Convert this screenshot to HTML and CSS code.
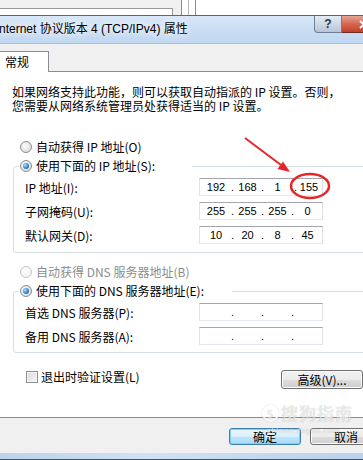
FILE: index.html
```html
<!DOCTYPE html>
<html lang="zh-CN">
<head>
    <meta charset="UTF-8">
    <meta name="viewport" content="width=device-width, initial-scale=1.0">
    <title>Internet 协议版本 4 (TCP/IPv4) 属性</title>
    <link rel="stylesheet" href="styles.css">
</head>
<body>
    <div class="bg-top">
        <div class="bg-left"><div class="bg-field"></div></div>
        <div class="bg-split"><div class="bg-split-inner"></div></div>
    </div>

    <div class="titlebar">
        <span class="title">nternet 协议版本 4 (TCP/IPv4) 属性</span>
        <div class="caption-btns">
            <span class="help-btn">?</span>
            <span class="close-btn">
                <svg width="10" height="9" viewBox="0 0 10 9"><path d="M1 1 L9 8 M9 1 L1 8" stroke="#fff" stroke-width="2"/></svg>
            </span>
        </div>
    </div>

    <div class="tabbar">
        <div class="tab">常规</div>
    </div>

    <div class="panel">
        <p class="intro">如果网络支持此功能，则可以获取自动指派的 IP 设置。否则，<br>您需要从网络系统管理员处获得适当的 IP 设置。</p>

        <div class="option first"><span class="radio"></span>自动获得 IP 地址(O)</div>
        <fieldset class="group">
            <legend class="option legend-ip"><span class="radio checked"></span>使用下面的 IP 地址(S):</legend>
            <div class="field">
                <span class="label">IP 地址(I):</span>
                <div class="ip">
                    <span class="oct"><span class="num">192</span></span>
                    <span class="oct"><span class="dot">.</span><span class="num">168</span></span>
                    <span class="oct"><span class="dot">.</span><span class="num">1</span></span>
                    <span class="oct last"><span class="dot">.</span><span class="num">155</span></span>
                </div>
            </div>
            <div class="field">
                <span class="label">子网掩码(U):</span>
                <div class="ip">
                    <span class="oct"><span class="num">255</span></span>
                    <span class="oct"><span class="dot">.</span><span class="num">255</span></span>
                    <span class="oct"><span class="dot">.</span><span class="num">255</span></span>
                    <span class="oct"><span class="dot">.</span><span class="num">0</span></span>
                </div>
            </div>
            <div class="field">
                <span class="label">默认网关(D):</span>
                <div class="ip">
                    <span class="oct"><span class="num">10</span></span>
                    <span class="oct"><span class="dot">.</span><span class="num">20</span></span>
                    <span class="oct"><span class="dot">.</span><span class="num">8</span></span>
                    <span class="oct"><span class="dot">.</span><span class="num">45</span></span>
                </div>
            </div>
        </fieldset>

        <div class="option disabled dns-auto"><span class="radio"></span>自动获得 DNS 服务器地址(B)</div>
        <fieldset class="group dns">
            <legend class="option legend-dns"><span class="radio checked"></span>使用下面的 DNS 服务器地址(E):</legend>
            <div class="field">
                <span class="label">首选 DNS 服务器(P):</span>
                <div class="ip">
                    <span class="oct"><span class="num"></span></span>
                    <span class="oct"><span class="dot">.</span><span class="num"></span></span>
                    <span class="oct"><span class="dot">.</span><span class="num"></span></span>
                    <span class="oct"><span class="dot">.</span><span class="num"></span></span>
                </div>
            </div>
            <div class="field">
                <span class="label">备用 DNS 服务器(A):</span>
                <div class="ip">
                    <span class="oct"><span class="num"></span></span>
                    <span class="oct"><span class="dot">.</span><span class="num"></span></span>
                    <span class="oct"><span class="dot">.</span><span class="num"></span></span>
                    <span class="oct"><span class="dot">.</span><span class="num"></span></span>
                </div>
            </div>
        </fieldset>

        <div class="verify">
            <span class="checkbox"></span>
            <span class="verify-text">退出时验证设置(L)</span>
            <button class="btn advanced">高级(V)...</button>
        </div>
    </div>

    <div class="footer">
        <button class="btn ok">确定</button>
        <button class="btn">取消</button>
    </div>
    <div class="frame-bottom"></div>

    <!-- annotation drawn on top of the screenshot -->
    <svg class="annotation" width="363" height="460" viewBox="0 0 363 460">
        <line x1="245" y1="138" x2="281" y2="165" stroke="#e4262b" stroke-width="2"/>
        <polygon points="290,172 277.5,169 283,161.5" fill="#e4262b"/>
        <ellipse cx="310" cy="186" rx="19" ry="12" fill="none" stroke="#e4262b" stroke-width="2.5"/>
    </svg>

    <div class="watermark">
        <div class="wm-main"><span class="wm-logo">S</span>搜狗指南</div>
        <div class="wm-sub">zhinan.sogou.com</div>
    </div>
</body>
</html>
```

FILE: styles.css
```css
body {
    margin: 0;
    width: 363px;
    height: 460px;
    overflow: hidden;
    position: relative;
    background: #fff;
    font-family: "Noto Sans CJK SC", "Liberation Sans", sans-serif;
    font-size: 12px;
    color: #000;
}

/* window behind the dialog */
.bg-top {
    height: 15px;
    display: flex;
    background: #fff;
}

.bg-left {
    width: 181px;
    background: #f0f0f0;
    padding-top: 8px;
    box-sizing: border-box;
}

.bg-field {
    width: 173px;
    height: 7px;
    background: #fff;
    border-top: 1px solid #9a9a9a;
    border-right: 1px solid #9a9a9a;
    box-sizing: border-box;
}

.bg-split {
    width: 15px;
    border-left: 1px solid #8d8d8d;
    border-right: 1px solid #8d8d8d;
    box-sizing: border-box;
    background: #fff;
    padding-left: 6px;
}

.bg-split-inner {
    height: 15px;
    width: 1px;
    background: #b5b5b5;
}

/* title bar */
.titlebar {
    height: 29px;
    box-sizing: border-box;
    border-top: 1px solid #5d6470;
    border-bottom: 1px solid #a9c0d9;
    background: linear-gradient(to bottom, #d9e8f8 0%, #c9ddf3 50%, #c1d8f1 100%);
    display: flex;
    align-items: flex-start;
}

.title {
    font-family: "Liberation Sans", "Noto Sans CJK SC", sans-serif;
    font-size: 12px;
    line-height: 27px;
    margin-left: -1px;
    text-shadow: 0 0 6px #fff, 0 0 10px #fff;
}

.caption-btns {
    margin-left: auto;
    margin-right: -23px;
    display: flex;
}

.help-btn {
    width: 28px;
    height: 17px;
    box-sizing: border-box;
    border: 1px solid #6f7e92;
    border-top: none;
    border-radius: 0 0 0 4px;
    background: linear-gradient(to bottom, #e4ecf5 0%, #cdd9e7 50%, #b6c6d9 100%);
    text-align: center;
    font-family: "Liberation Sans", sans-serif;
    font-weight: bold;
    font-size: 12px;
    line-height: 16px;
    color: #333;
}

.close-btn {
    width: 44px;
    height: 17px;
    box-sizing: border-box;
    border: 1px solid #6b2a22;
    border-top: none;
    border-left: none;
    background: linear-gradient(to bottom, #e6a597 0%, #d7664f 50%, #c2412a 100%);
    display: flex;
    align-items: center;
    justify-content: center;
}

/* tabs */
.tabbar {
    height: 28px;
    box-sizing: border-box;
    padding-top: 7px;
    background: #f0f0f0;
    border-bottom: 1px solid #898c95;
    display: flex;
    align-items: flex-start;
}

.tab {
    width: 49px;
    height: 21px;
    box-sizing: border-box;
    margin-bottom: -1px;
    background: #fff;
    border-top: 1px solid #898c95;
    border-right: 1px solid #898c95;
    padding-left: 5px;
    line-height: 19px;
    font-size: 12px;
}

/* panel */
.panel {
    height: 332px;
    background: #fff;
    border-bottom: 1px solid #898c95;
    padding-top: 13px;
    box-sizing: content-box;
    overflow: hidden;
}

.intro {
    margin: 0 0 0 12px;
    line-height: 14px;
    font-size: 12px;
    white-space: nowrap;
}

.option {
    display: flex;
    align-items: center;
    height: 16px;
    line-height: 16px;
    white-space: nowrap;
}

.option.first {
    margin-top: 26px;
    padding-left: 20px;
}

.radio {
    width: 12px;
    height: 12px;
    box-sizing: border-box;
    border-radius: 50%;
    border: 1px solid #8b8f94;
    background: radial-gradient(circle at 40% 40%, #fdfdfd 0%, #e6e6e6 55%, #cfcfcf 100%);
    margin-right: 4px;
    display: flex;
    align-items: center;
    justify-content: center;
    flex: none;
}

.radio.checked::after {
    content: "";
    width: 6px;
    height: 6px;
    border-radius: 50%;
    background: radial-gradient(circle at 35% 35%, #a7e0ff 0%, #3a8fd6 50%, #134f8c 100%);
}

.option.disabled {
    color: #8c8c8c;
}

.option.disabled .radio {
    border-color: #c3c6c9;
    background: radial-gradient(circle at 40% 40%, #fcfcfc 0%, #f1f1f1 100%);
}

.dns-auto {
    margin-top: 11px;
    padding-left: 20px;
}

.group {
    margin: 3px -10px 0 13px;
    padding: 0 0 8px 0;
    border: 1px solid #d5dfe5;
    border-radius: 3px;
    min-width: 0;
}

.group.dns {
    padding-bottom: 7px;
}

.group legend {
    margin-left: 5px;
    padding: 0 0 0 1px;
    box-sizing: border-box;
}

.legend-ip {
    width: 173px;
}

.legend-dns {
    width: 213px;
}

.field {
    display: flex;
    align-items: center;
    height: 18px;
    padding-left: 11px;
    margin-bottom: 6px;
}

.field:first-of-type {
    margin-top: 4px;
}

.field:last-child {
    margin-bottom: 0;
}

.label {
    width: 174px;
    flex: none;
    white-space: nowrap;
}

.ip {
    width: 124px;
    height: 18px;
    box-sizing: border-box;
    border: 1px solid #abadb3;
    border-top-color: #a3a6ae;
    border-bottom-color: #e3e9ef;
    border-left-color: #e2e3ea;
    border-right-color: #dbdfe6;
    padding-left: 1px;
    display: flex;
    font-family: "Liberation Sans", sans-serif;
    font-size: 11px;
    line-height: 16px;
}

.oct {
    width: 30px;
    display: flex;
}

.oct.last .dot {
    width: 6px;
    text-align: right;
}

.dot {
    width: 3px;
}

.num {
    flex: 1;
    text-align: center;
}

/* bottom of the panel */
.verify {
    display: flex;
    align-items: flex-start;
    margin-top: 17px;
    padding-left: 26px;
    height: 19px;
}

.checkbox {
    width: 12px;
    height: 12px;
    box-sizing: border-box;
    margin-top: 1px;
    border: 1px solid #8f8f8f;
    background: linear-gradient(135deg, #dcdcdc 0%, #f4f4f4 100%);
    box-shadow: inset 0 0 0 1px #f7f7f7;
    flex: none;
}

.verify-text {
    margin-left: 3px;
    line-height: 14px;
}

.btn {
    font-family: "Noto Sans CJK SC", "Liberation Sans", sans-serif;
    font-size: 12px;
    color: #000;
    width: 72px;
    height: 17px;
    padding: 0;
    line-height: 15px;
    box-sizing: border-box;
    border: 1px solid #707070;
    border-radius: 3px;
    background: linear-gradient(to bottom, #f2f2f2 0%, #ebebeb 50%, #dddddd 51%, #cfcfcf 100%);
    box-shadow: inset 0 0 0 1px #fcfcfc;
    flex: none;
}

.btn.advanced {
    margin-left: auto;
    width: 82px;
    height: 19px;
    line-height: 17px;
}

.footer {
    height: 35px;
    box-sizing: border-box;
    background: #f0f0f0;
    padding: 10px 0 0 229px;
    display: flex;
    align-items: flex-start;
    gap: 9px;
    overflow: hidden;
}

.btn.ok {
    border-color: #3c7fb1;
    background: linear-gradient(to bottom, #eaf6fd 0%, #d9f0fc 50%, #bee6fd 51%, #a7d9f5 100%);
    box-shadow: inset 0 0 0 1px #7ed1f4;
}

.frame-bottom {
    height: 7px;
    box-sizing: border-box;
    background: linear-gradient(to right, #bcd3ec 0%, #cfe2f6 40%, #b9d2ee 100%);
    border-bottom: 1px solid #4d4f55;
}

/* overlays */
.annotation {
    position: absolute;
    top: 0;
    left: 0;
    pointer-events: none;
}

.watermark {
    position: absolute;
    left: 262px;
    top: 403px;
    pointer-events: none;
    color: rgba(255, 255, 255, 0.7);
    text-shadow: 0 0 1px rgba(110, 110, 110, 0.5);
}

.wm-main {
    display: flex;
    align-items: center;
    font-size: 17px;
    line-height: 20px;
    letter-spacing: 1px;
}

.wm-logo {
    width: 13px;
    height: 13px;
    border-radius: 50%;
    border: 2px solid rgba(255, 255, 255, 0.7);
    box-shadow: 0 0 1px rgba(110, 110, 110, 0.5);
    font-size: 10px;
    line-height: 13px;
    text-align: center;
    margin-right: 2px;
}

.wm-sub {
    font-family: "Liberation Sans", sans-serif;
    font-size: 8px;
    line-height: 9px;
    margin-top: 3px;
    margin-left: 5px;
    letter-spacing: 0.5px;
}
```
